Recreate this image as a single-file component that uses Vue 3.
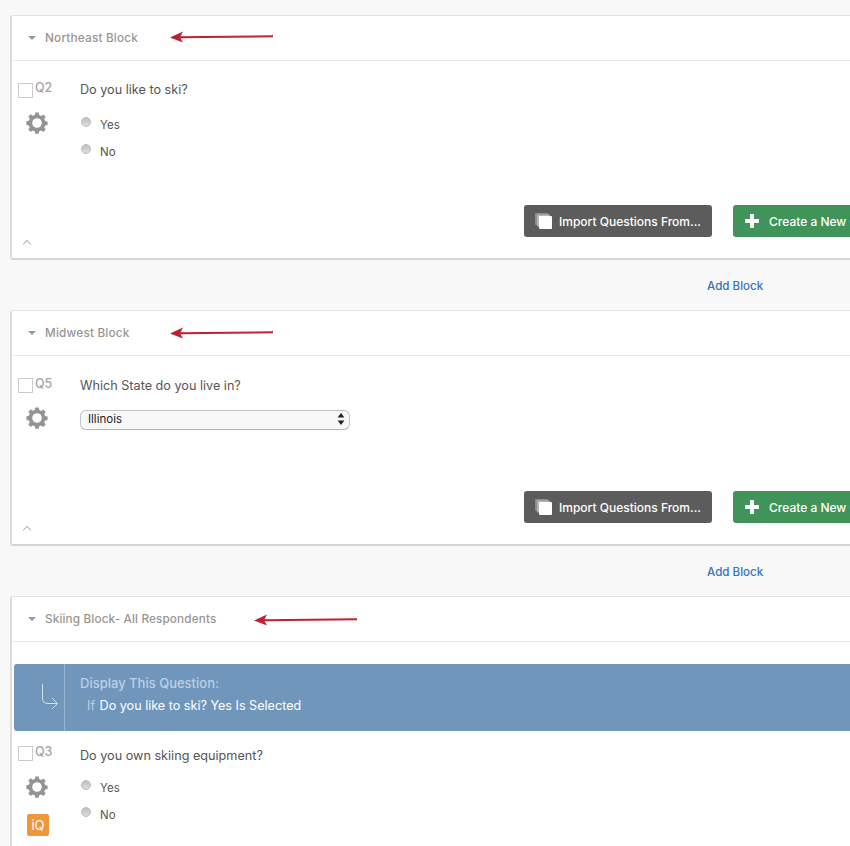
<script setup>
const gear = 'M9.3 .6h3.400l.5 2.500 2 .8 2.100-1.400 2.400 2.400-1.400 2.100.8 2 2.500.5v3.400l-2.500.5-.8 2 1.400 2.100-2.400 2.400-2.100-1.400-2 .8-.5 2.500H9.300l-.5-2.500-2-.8-2.100 1.400-2.400-2.400 1.400-2.100-.8-2-2.500-.5V9.300l2.500-.5.8-2-1.400-2.100 2.400-2.400 2.100 1.400 2-.8zM11 6.200a4.800 4.800 0 1 0 0 9.600 4.800 4.800 0 0 0 0-9.600z'
</script>

<template>
  <main class="page">
    <section class="card first">
      <header class="head">
        <span class="tri"></span><h2>Northeast Block</h2>
        <svg class="arrow" style="left:158px" width="104" height="14" viewBox="0 0 104 14"><path d="M103 6.200 10 7.200" stroke="#c0202f" stroke-width="2" fill="none"/><path d="M0 7.400 13 1.600 10 7.200 13 12.600z" fill="#c0202f"/></svg>
      </header>
      <div class="question">
        <div class="side">
          <div class="tag"><span class="box"></span><b class="up">Q2</b></div>
          <svg class="gear" width="22" height="22" viewBox="0 0 22 22"><path :d="gear" fill="#949494" fill-rule="evenodd"/></svg>
        </div>
        <div class="body">
          <p class="title">Do you like to ski?</p>
          <div class="opts">
            <label class="opt"><i class="radio"></i><span>Yes</span></label>
            <label class="opt"><i class="radio"></i><span>No</span></label>
          </div>
        </div>
      </div>
      <div class="actions a1">
        <button class="btn dark">
          <svg width="18" height="16" viewBox="0 0 18 16"><rect x="0" y="0" width="13" height="12" rx="1" fill="#8d8d8d"/><rect x="2" y="1.500" width="13" height="12" rx="1" fill="#b5b5b5"/><rect x="4" y="3" width="13" height="13" rx="1" fill="#fff"/></svg>
          Import Questions From...
        </button>
        <button class="btn green"><span class="plus"></span>Create a New Question</button>
      </div>
      <span class="caret"></span>
    </section>

    <div class="add"><a>Add Block</a></div>

    <section class="card second">
      <header class="head">
        <span class="tri"></span><h2>Midwest Block</h2>
        <svg class="arrow a-mid" style="left:158px" width="104" height="14" viewBox="0 0 104 14"><path d="M103 6.200 10 7.200" stroke="#c0202f" stroke-width="2" fill="none"/><path d="M0 7.400 13 1.600 10 7.200 13 12.600z" fill="#c0202f"/></svg>
      </header>
      <div class="question">
        <div class="side">
          <div class="tag"><span class="box"></span><b>Q5</b></div>
          <svg class="gear" width="22" height="22" viewBox="0 0 22 22"><path :d="gear" fill="#949494" fill-rule="evenodd"/></svg>
        </div>
        <div class="body">
          <p class="title t5">Which State do you live in?</p>
          <div class="select">
            <span>Illinois</span>
            <svg width="8" height="12" viewBox="0 0 8 12"><path d="M4 0 7.400 4.600H.6zM4 12 .6 7.400h6.800z" fill="#222"/></svg>
          </div>
        </div>
      </div>
      <div class="actions a2">
        <button class="btn dark">
          <svg width="18" height="16" viewBox="0 0 18 16"><rect x="0" y="0" width="13" height="12" rx="1" fill="#8d8d8d"/><rect x="2" y="1.500" width="13" height="12" rx="1" fill="#b5b5b5"/><rect x="4" y="3" width="13" height="13" rx="1" fill="#fff"/></svg>
          Import Questions From...
        </button>
        <button class="btn green"><span class="plus"></span>Create a New Question</button>
      </div>
      <span class="caret"></span>
    </section>

    <div class="add"><a>Add Block</a></div>

    <section class="card third">
      <header class="head">
        <span class="tri"></span><h2 class="h-ski">Skiing Block- All Respondents</h2>
        <svg class="arrow a-ski" style="left:242px" width="104" height="14" viewBox="0 0 104 14"><path d="M103 6.200 10 7.200" stroke="#c0202f" stroke-width="2" fill="none"/><path d="M0 7.400 13 1.600 10 7.200 13 12.600z" fill="#c0202f"/></svg>
      </header>
      <div class="logic">
        <div class="logic-icon">
          <svg width="17" height="25" viewBox="0 0 17 25"><path d="M1.500 0v14q0 5.500 5.500 5.500h9M11 14l5.500 5.500L11 25" fill="none" stroke="#d3e0ec" stroke-width="1"/></svg>
        </div>
        <div class="logic-text">
          <p class="lt1">Display This Question:</p>
          <p class="lt2"><span>If</span> Do you like to ski? Yes Is Selected</p>
        </div>
      </div>
      <div class="question q3">
        <div class="side">
          <div class="tag"><span class="box"></span><b>Q3</b></div>
          <svg class="gear g3" width="22" height="22" viewBox="0 0 22 22"><path :d="gear" fill="#949494" fill-rule="evenodd"/></svg>
          <div class="iq">iQ</div>
        </div>
        <div class="body">
          <p class="title t3">Do you own skiing equipment?</p>
          <div class="opts o3">
            <label class="opt"><i class="radio"></i><span>Yes</span></label>
            <label class="opt"><i class="radio"></i><span>No</span></label>
          </div>
        </div>
      </div>
    </section>
  </main>
</template>

<style scoped>
.page {
  width: 850px;
  height: 846px;
  overflow: hidden;
  background: #f8f8f8;
  padding: 15px 0 0 10px;
  box-sizing: border-box;
  font-family: Inter, "Liberation Sans", sans-serif;
}
.card {
  position: relative;
  width: 900px;
  box-sizing: border-box;
  background: #fff;
  border: 1px solid #e2e2e2;
  border-left: 2px solid #dcdcdc;
  border-bottom: 2px solid #d4d4d4;
  border-radius: 3px 0 0 3px;
}
.first { height: 245px; }
.second { height: 236px; }
.third { height: 300px; }
.head {
  position: relative;
  display: flex;
  align-items: center;
  box-sizing: content-box;
  height: 43px;
  padding: 0 0 1px 16px;
  border-bottom: 1px solid #e9e9e9;
}
.tri {
  width: 0;
  height: 0;
  border-left: 4.500px solid transparent;
  border-right: 4.500px solid transparent;
  border-top: 4.500px solid #999;
  margin-right: 9px;
}
h2 {
  margin: 0;
  font-size: 11.750px;
  font-weight: 500;
  color: #999690;
  letter-spacing: 0.2px;
}
.h-ski { letter-spacing: 0.13px; }
.arrow { position: absolute; top: 14px; }
.a-mid { top: 15px; }
.a-ski { top: 16px; }
.question {
  display: flex;
  padding: 22px 0 0 6px;
}
.q3 { padding-top: 15px; }
.side { width: 62px; flex: none; }
.tag { display: flex; align-items: flex-start; height: 14px; }
.box {
  width: 13px;
  height: 13px;
  background: #fff;
  border: 1px solid #ccc;
  flex: none;
}
.tag b {
  margin: -2px 0 0 2px;
  font-size: 12.500px;
  font-weight: 500;
  color: #a5a5a5;
}
.tag .up { margin-top: -3px; }
.gear { display: block; margin: 15px 0 0 8px; }
.g3 { margin-top: 16px; }
.iq {
  width: 22px;
  height: 22px;
  margin: 16px 0 0 9px;
  border-radius: 2px;
  background: #ef963c;
  color: #fff;
  font-size: 13px;
  line-height: 22px;
  text-align: center;
}
.title {
  margin: -1px 0 0;
  font-size: 12.650px;
  line-height: 16px;
  color: #555;
}
.t5 { margin-top: 0; }
.t3 { margin-top: 2px; }
.opts { margin-top: 17px; }
.o3 { margin-top: 14px; }
.opt {
  display: flex;
  align-items: flex-start;
  height: 27px;
  font-size: 11.500px;
  line-height: 16px;
  color: #555;
}
.opt span { margin-top: 2px; }
.radio {
  width: 8px;
  height: 8px;
  margin: 2px 9px 0 1px;
  border-radius: 50%;
  background: linear-gradient(#bfbfbf, #dedede);
  border: 1px solid #bbb;
  flex: none;
}
.select {
  display: flex;
  align-items: center;
  justify-content: space-between;
  box-sizing: border-box;
  width: 270px;
  height: 20px;
  margin-top: 16px;
  padding: 0 4px 2px 7px;
  border: 1px solid #c2c2c2;
  border-bottom-color: #b4b4b4;
  border-radius: 6px;
  background: #f8f8f8;
  font-size: 11.500px;
  color: #222;
}
.actions {
  position: absolute;
  top: 189px;
  left: 512px;
  display: flex;
  gap: 21px;
}
.a2 { top: 180px; }
.btn {
  display: flex;
  align-items: center;
  box-sizing: border-box;
  height: 32px;
  border: 0;
  border-radius: 3px;
  color: #fff;
  font-family: inherit;
  font-size: 12px;
  font-weight: 500;
  white-space: nowrap;
}
.dark { width: 188px; padding: 0 0 0 11px; gap: 6px; background: #5c5c5c; }
.green { width: 230px; padding: 0 0 0 12px; background: #40945a; }
.plus {
  position: relative;
  width: 14px;
  height: 14px;
  margin-right: 10px;
  background:
    linear-gradient(#fff, #fff) center / 14px 4px no-repeat,
    linear-gradient(#fff, #fff) center / 4px 14px no-repeat;
}
.caret {
  position: absolute;
  left: 12px;
  bottom: 11px;
  width: 5px;
  height: 5px;
  border-top: 1px solid #b5b5b5;
  border-left: 1px solid #b5b5b5;
  transform: rotate(45deg);
}
.add {
  display: flex;
  align-items: center;
  box-sizing: border-box;
  height: 50px;
  padding: 2px 0 0 697px;
  font-size: 11.600px;
  font-weight: 500;
  color: #3575b5;
}
.logic {
  display: flex;
  height: 67px;
  margin: 22px 0 0 2px;
  background: #7096bc;
  border-radius: 3px 0 0 3px;
}
.logic-icon {
  display: flex;
  align-items: center;
  justify-content: flex-end;
  width: 51px;
  flex: none;
  border-right: 1px solid #97b3cf;
  padding: 0 6px 2px 0;
  box-sizing: border-box;
}
.logic-text { padding-left: 15px; }
.logic-text p { margin: 0; line-height: 16px; }
.lt1 { padding-top: 11px; color: #bdd0e3; font-weight: 500; font-size: 13px; }
.lt2 { padding: 7px 0 0 7px; color: #fff; font-size: 12.600px; }
.lt2 span { color: #bdd0e3; margin-right: 1px; }
</style>
